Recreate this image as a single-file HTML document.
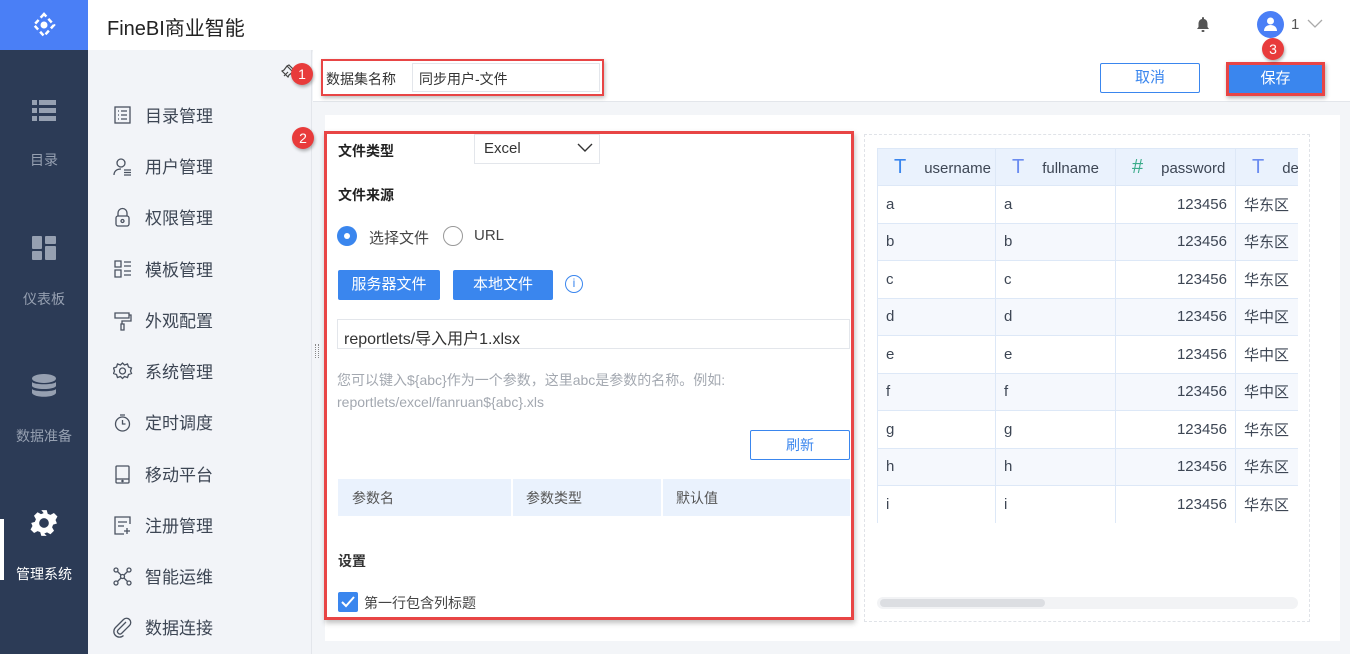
<!DOCTYPE html>
<html><head><meta charset="utf-8"><style>
*{margin:0;padding:0;box-sizing:border-box}
body{width:1350px;height:654px;overflow:hidden;position:relative;background:#f3f5f8;font-family:"Liberation Sans","Noto Sans CJK SC",sans-serif;color:#333}
.a{position:absolute}
.nav{left:0;top:50px;width:88px;height:604px;background:#2c3b56}
.nl{width:88px;text-align:center;font-size:14px;color:#96a0b1}
.sb{left:88px;top:50px;width:224px;height:604px;background:#f2f4f8;border-right:1px solid #e3e6eb}
.si{left:145px;font-size:17px;color:#3d4654}
.badge{width:22px;height:22px;border-radius:50%;background:#e83b3b;color:#fff;font-size:14px;text-align:center;line-height:22px;box-shadow:1px 2px 3px rgba(0,0,0,.3)}
.btn{background:#3a86ee;color:#fff;font-size:15px;text-align:center;border-radius:2px}
td,th{border:1px solid #dde8f7;font-size:15px;color:#3d4654;height:37.5px;padding:0 8px;text-align:left;font-weight:normal}
th{background:#eaf2fd;height:37px}
tr:nth-child(odd) td{background:#f5f8fd}
</style></head><body>
<div class="a" style="left:0;top:0;width:1350px;height:50px;background:#fff;box-shadow:0 1px 3px rgba(0,0,0,.06)"></div>
<div class="a" style="left:0;top:0;width:88px;height:50px;background:#4a7ff6"></div>
<svg class="a" style="left:30px;top:11px" width="28" height="28" viewBox="0 0 28 28"><g fill="none" stroke="#fff" stroke-width="2.5"><path d="M14 3 L4 14 L14 25 L24 14 Z" stroke-dasharray="5 3"/></g><circle cx="14" cy="14" r="3.5" fill="#fff"/></svg>
<div class="a" style="left:107px;top:12px;font-size:20px;color:#222">FineBI商业智能</div>
<svg class="a" style="left:1196px;top:16px" width="14" height="16" viewBox="0 0 14 16"><path d="M7 1a1 1 0 0 1 1 1v1c2.5.5 3.5 2.5 3.5 5v3l1.5 2H1l1.5-2V8c0-2.5 1-4.5 3.5-5V2a1 1 0 0 1 1-1z" fill="#555"/><rect x="5.5" y="14" width="3" height="2" rx="1" fill="#555"/></svg>
<div class="a" style="left:1257px;top:11px;width:27px;height:27px;border-radius:50%;background:#4a7ff6"></div>
<svg class="a" style="left:1263px;top:16px" width="15" height="16" viewBox="0 0 15 16"><circle cx="7.5" cy="5" r="3.5" fill="#fff"/><path d="M1 15c0-4 3-6 6.5-6s6.5 2 6.5 6z" fill="#fff"/></svg>
<div class="a" style="left:1291px;top:16px;font-size:15px;color:#555">1</div>
<svg class="a" style="left:1307px;top:19px" width="16" height="10"><path d="M1 1l7 7 7-7" fill="none" stroke="#aaa" stroke-width="1.3"/></svg>
<div class="a nav"></div>
<svg class="a" style="left:32px;top:100px" width="24" height="22"><g fill="#96a0b1"><rect x="0" y="0" width="5" height="5"/><rect x="7" y="0" width="17" height="5"/><rect x="0" y="8" width="5" height="5"/><rect x="7" y="8" width="17" height="5"/><rect x="0" y="16" width="5" height="5"/><rect x="7" y="16" width="17" height="5"/></g></svg>
<div class="a nl" style="top:150px">目录</div>
<svg class="a" style="left:32px;top:236px" width="24" height="24"><g fill="#96a0b1"><rect x="0" y="0" width="10" height="13" rx="1"/><rect x="13" y="0" width="11" height="8" rx="1"/><rect x="0" y="15" width="10" height="9" rx="1"/><rect x="13" y="10" width="11" height="14" rx="1"/></g></svg>
<div class="a nl" style="top:289px">仪表板</div>
<svg class="a" style="left:32px;top:374px" width="24" height="24"><g fill="#96a0b1"><ellipse cx="12" cy="4.5" rx="12" ry="4.5"/><path d="M0 8c2 3 22 3 24 0v4c-2 4-22 4-24 0z"/><path d="M0 15c2 3 22 3 24 0v4c-2 5-22 5-24 0z"/></g></svg>
<div class="a nl" style="top:426px">数据准备</div>
<div class="a" style="left:0;top:519px;width:4px;height:61px;background:#fff"></div>
<svg class="a" style="left:30px;top:509px" width="28" height="28" viewBox="0 0 26 26"><path fill="#fff" fill-rule="evenodd" d="M10.5 1h5l1 3.5 2.5 1 3.2-1.8 3.3 3.3-1.8 3.2 1 2.5L25 13.5l-3.5 1-1 2.5 1.8 3.2-3.3 3.3-3.2-1.8-2.5 1L15.5 25h-5l-1-3.5-2.5-1-3.2 1.8-3.3-3.3 1.8-3.2-1-2.5L1 13l3.5-1 1-2.5L3.7 6.3l3.3-3.3 3.2 1.8 2.5-1zM13 8.5a4.5 4.5 0 1 0 0 9 4.5 4.5 0 1 0 0-9z"/></svg>
<div class="a nl" style="top:564px;color:#fff">管理系统</div>
<div class="a sb"></div>
<svg class="a" style="left:281px;top:63px" width="16" height="16"><path d="M3 13l4-4M6 3l7 7M8 2l6 6-2 1-4 3-1 2-6-6 2-1 3-4z" fill="none" stroke="#444" stroke-width="1.2"/></svg>
<div class="a si" style="top:102px">目录管理</div>
<div class="a si" style="top:153px">用户管理</div>
<div class="a si" style="top:204px">权限管理</div>
<div class="a si" style="top:256px">模板管理</div>
<div class="a si" style="top:307px">外观配置</div>
<div class="a si" style="top:358px">系统管理</div>
<div class="a si" style="top:409px">定时调度</div>
<div class="a si" style="top:461px">移动平台</div>
<div class="a si" style="top:512px">注册管理</div>
<div class="a si" style="top:563px">智能运维</div>
<div class="a si" style="top:614px">数据连接</div>
<svg class="a" style="left:113px;top:106px" width="20" height="540" fill="none" stroke="#4a5260" stroke-width="1.3">
<rect x="2" y="1" width="15" height="16"/><path d="M5 5h1M8 5h6M5 9h1M8 9h6M5 13h1M8 13h6"/>
<g transform="translate(0,51)"><circle cx="8" cy="6" r="4"/><path d="M1 18c0-4 3-6 7-6M11 13h7M11 15.5h7M11 18h7"/></g>
<g transform="translate(0,102)"><rect x="3" y="8" width="13" height="10" rx="2"/><path d="M5 8V5a4.5 4.5 0 0 1 9 0v3"/><circle cx="9.5" cy="13" r="1.5"/></g>
<g transform="translate(0,154)"><path d="M2 1h6v6H2zM11 2h7M11 6h7M2 10h6v7H2zM11 11h7M11 15h7"/></g>
<g transform="translate(0,205)"><path d="M2 2h14v5H2zM16 4h2v6H9v3M8 13h3v6H8z"/></g>
<g transform="translate(0,256)"><circle cx="9.5" cy="9" r="3"/><path d="M9.5 1l2 2 3-1 1 3 3 1-1 3 1 2.5-3 1-1 3-3-1-2 2-2-2-3 1-1-3-3-1 1-2.5-1-3 3-1 1-3 3 1z"/></g>
<g transform="translate(0,307)"><circle cx="9.5" cy="11" r="7"/><path d="M9.5 7v4h3M7 2h5"/></g>
<g transform="translate(0,359)"><rect x="3" y="1" width="13" height="17" rx="1"/><path d="M3 14h13"/><circle cx="9.5" cy="16" r=".6"/></g>
<g transform="translate(0,410)"><path d="M17 8V1H2v17h9M5 6h9M5 10h6M14 12v6M11 15h6"/></g>
<g transform="translate(0,461)"><circle cx="3" cy="3" r="2"/><circle cx="16" cy="3" r="2"/><circle cx="3" cy="16" r="2"/><circle cx="16" cy="16" r="2"/><circle cx="9.5" cy="9.5" r="2"/><path d="M4.5 4.5l3.5 3.5M14.5 4.5l-3.5 3.5M4.5 14.5l3.5-3.5M14.5 14.5l-3.5-3.5"/></g>
<g transform="translate(0,512)"><path d="M13 4l-8 8a2.5 2.5 0 0 0 3.5 3.5l8-8a4 4 0 0 0-6-6l-8 8a5.5 5.5 0 0 0 8 8"/></g>
</svg>
<div class="a" style="left:313px;top:50px;width:1037px;height:52px;background:#fff;border-bottom:1px solid #e3e6eb"></div>
<div class="a" style="left:321px;top:59px;width:283px;height:37px;border:2px solid #e84545;box-shadow:1px 2px 4px rgba(0,0,0,.25)"></div>
<div class="a" style="left:326px;top:69px;font-size:14px;color:#333">数据集名称</div>
<div class="a" style="left:412px;top:63px;width:188px;height:29px;border:1px solid #e3e6eb;background:#fff;font-size:14px;padding:5px 6px;color:#333">同步用户-文件</div>
<div class="a badge" style="left:291px;top:63px">1</div>
<div class="a" style="left:1100px;top:63px;width:100px;height:30px;border:1px solid #3a86ee;border-radius:2px;color:#3a86ee;font-size:15px;text-align:center;line-height:28px;background:#fff">取消</div>
<div class="a" style="left:1226px;top:62px;width:99px;height:34px;border:3px solid #e84545;box-shadow:1px 2px 4px rgba(0,0,0,.3);background:#3a86ee;color:#fff;font-size:15px;text-align:center;line-height:28px">保存</div>
<div class="a badge" style="left:1262px;top:38px">3</div>
<div class="a" style="left:325px;top:115px;width:1015px;height:526px;background:#fff"></div>
<div class="a" style="left:315px;top:344px;width:4px;height:14px;border-left:1px dotted #888;border-right:1px dotted #888"></div>
<div class="a" style="left:324px;top:131px;width:530px;height:489px;border:3px solid #e84545;box-shadow:1px 3px 5px rgba(0,0,0,.25)"></div>
<div class="a badge" style="left:292px;top:127px">2</div>
<div class="a" style="left:338px;top:141px;font-size:14px;font-weight:bold;color:#222">文件类型</div>
<div class="a" style="left:474px;top:134px;width:126px;height:30px;border:1px solid #e3e6eb;font-size:15px;padding:5px 9px;color:#333">Excel</div>
<svg class="a" style="left:577px;top:143px" width="16" height="10"><path d="M1 1l7 7 7-7" fill="none" stroke="#333" stroke-width="1.4"/></svg>
<div class="a" style="left:338px;top:185px;font-size:14px;font-weight:bold;color:#222">文件来源</div>
<div class="a" style="left:337px;top:226px;width:20px;height:20px;border-radius:50%;background:#3a86ee"></div>
<div class="a" style="left:344px;top:233px;width:6px;height:6px;border-radius:50%;background:#fff"></div>
<div class="a" style="left:369px;top:227px;font-size:15px;color:#444">选择文件</div>
<div class="a" style="left:443px;top:226px;width:20px;height:20px;border-radius:50%;border:1px solid #999"></div>
<div class="a" style="left:474px;top:227px;font-size:15px;color:#444">URL</div>
<div class="a btn" style="left:338px;top:270px;width:102px;height:30px;line-height:30px">服务器文件</div>
<div class="a btn" style="left:453px;top:270px;width:100px;height:30px;line-height:30px">本地文件</div>
<div class="a" style="left:565px;top:275px;width:18px;height:18px;border-radius:50%;border:1.5px solid #3a86ee;color:#3a86ee;font-size:12px;text-align:center;line-height:15px">i</div>
<div class="a" style="left:337px;top:319px;width:513px;height:30px;border:1px solid #e3e6eb;font-size:16px;padding:5px 6px;color:#333">reportlets/导入用户1.xlsx</div>
<div class="a" style="left:337px;top:369px;font-size:14px;color:#a3a8b0;line-height:22px">您可以键入${abc}作为一个参数，这里abc是参数的名称。例如:<br>reportlets/excel/fanruan${abc}.xls</div>
<div class="a" style="left:750px;top:430px;width:100px;height:30px;border:1px solid #3a86ee;border-radius:2px;color:#3a86ee;font-size:14px;text-align:center;line-height:28px">刷新</div>
<div class="a" style="left:338px;top:479px;width:512px;height:37px;background:#eaf2fd"></div>
<div class="a" style="left:511px;top:479px;width:2px;height:37px;background:#fff"></div>
<div class="a" style="left:661px;top:479px;width:2px;height:37px;background:#fff"></div>
<div class="a" style="left:352px;top:488px;font-size:14px;color:#555">参数名</div>
<div class="a" style="left:526px;top:488px;font-size:14px;color:#555">参数类型</div>
<div class="a" style="left:676px;top:488px;font-size:14px;color:#555">默认值</div>
<div class="a" style="left:338px;top:551px;font-size:14px;font-weight:bold;color:#333">设置</div>
<div class="a" style="left:338px;top:592px;width:20px;height:20px;background:#3a86ee;border-radius:2px"></div>
<svg class="a" style="left:341px;top:596px" width="14" height="12"><path d="M1 6l4 4 8-9" fill="none" stroke="#fff" stroke-width="2"/></svg>
<div class="a" style="left:364px;top:593px;font-size:14px;color:#444">第一行包含列标题</div>
<div class="a" style="left:864px;top:134px;width:446px;height:488px;border:1px dashed #e0e3e8"></div>
<div class="a" style="left:877px;top:148px;width:421px;height:375px;overflow:hidden">
<table style="border-collapse:collapse;width:480px;table-layout:fixed">
<colgroup><col style="width:118px"><col style="width:120px"><col style="width:120px"><col style="width:122px"></colgroup>
<tr><th><span style="color:#3a86ee;font-size:20px;margin:0 18px 0 8px">T</span>username</th><th><span style="color:#6b8cf0;font-size:20px;margin:0 18px 0 8px">T</span>fullname</th><th><span style="color:#3aab8a;font-size:20px;margin:0 18px 0 8px">#</span>password</th><th><span style="color:#6b8cf0;font-size:20px;margin:0 18px 0 8px">T</span>dep</th></tr>
<tr><td>a</td><td>a</td><td style="text-align:right">123456</td><td>华东区</td></tr>
<tr><td>b</td><td>b</td><td style="text-align:right">123456</td><td>华东区</td></tr>
<tr><td>c</td><td>c</td><td style="text-align:right">123456</td><td>华东区</td></tr>
<tr><td>d</td><td>d</td><td style="text-align:right">123456</td><td>华中区</td></tr>
<tr><td>e</td><td>e</td><td style="text-align:right">123456</td><td>华中区</td></tr>
<tr><td>f</td><td>f</td><td style="text-align:right">123456</td><td>华中区</td></tr>
<tr><td>g</td><td>g</td><td style="text-align:right">123456</td><td>华东区</td></tr>
<tr><td>h</td><td>h</td><td style="text-align:right">123456</td><td>华东区</td></tr>
<tr><td>i</td><td>i</td><td style="text-align:right">123456</td><td>华东区</td></tr>
</table></div>
<div class="a" style="left:877px;top:597px;width:421px;height:12px;border-radius:6px;background:#f2f3f5"></div>
<div class="a" style="left:880px;top:599px;width:165px;height:8px;border-radius:4px;background:#dcdee2"></div>
</body></html>
